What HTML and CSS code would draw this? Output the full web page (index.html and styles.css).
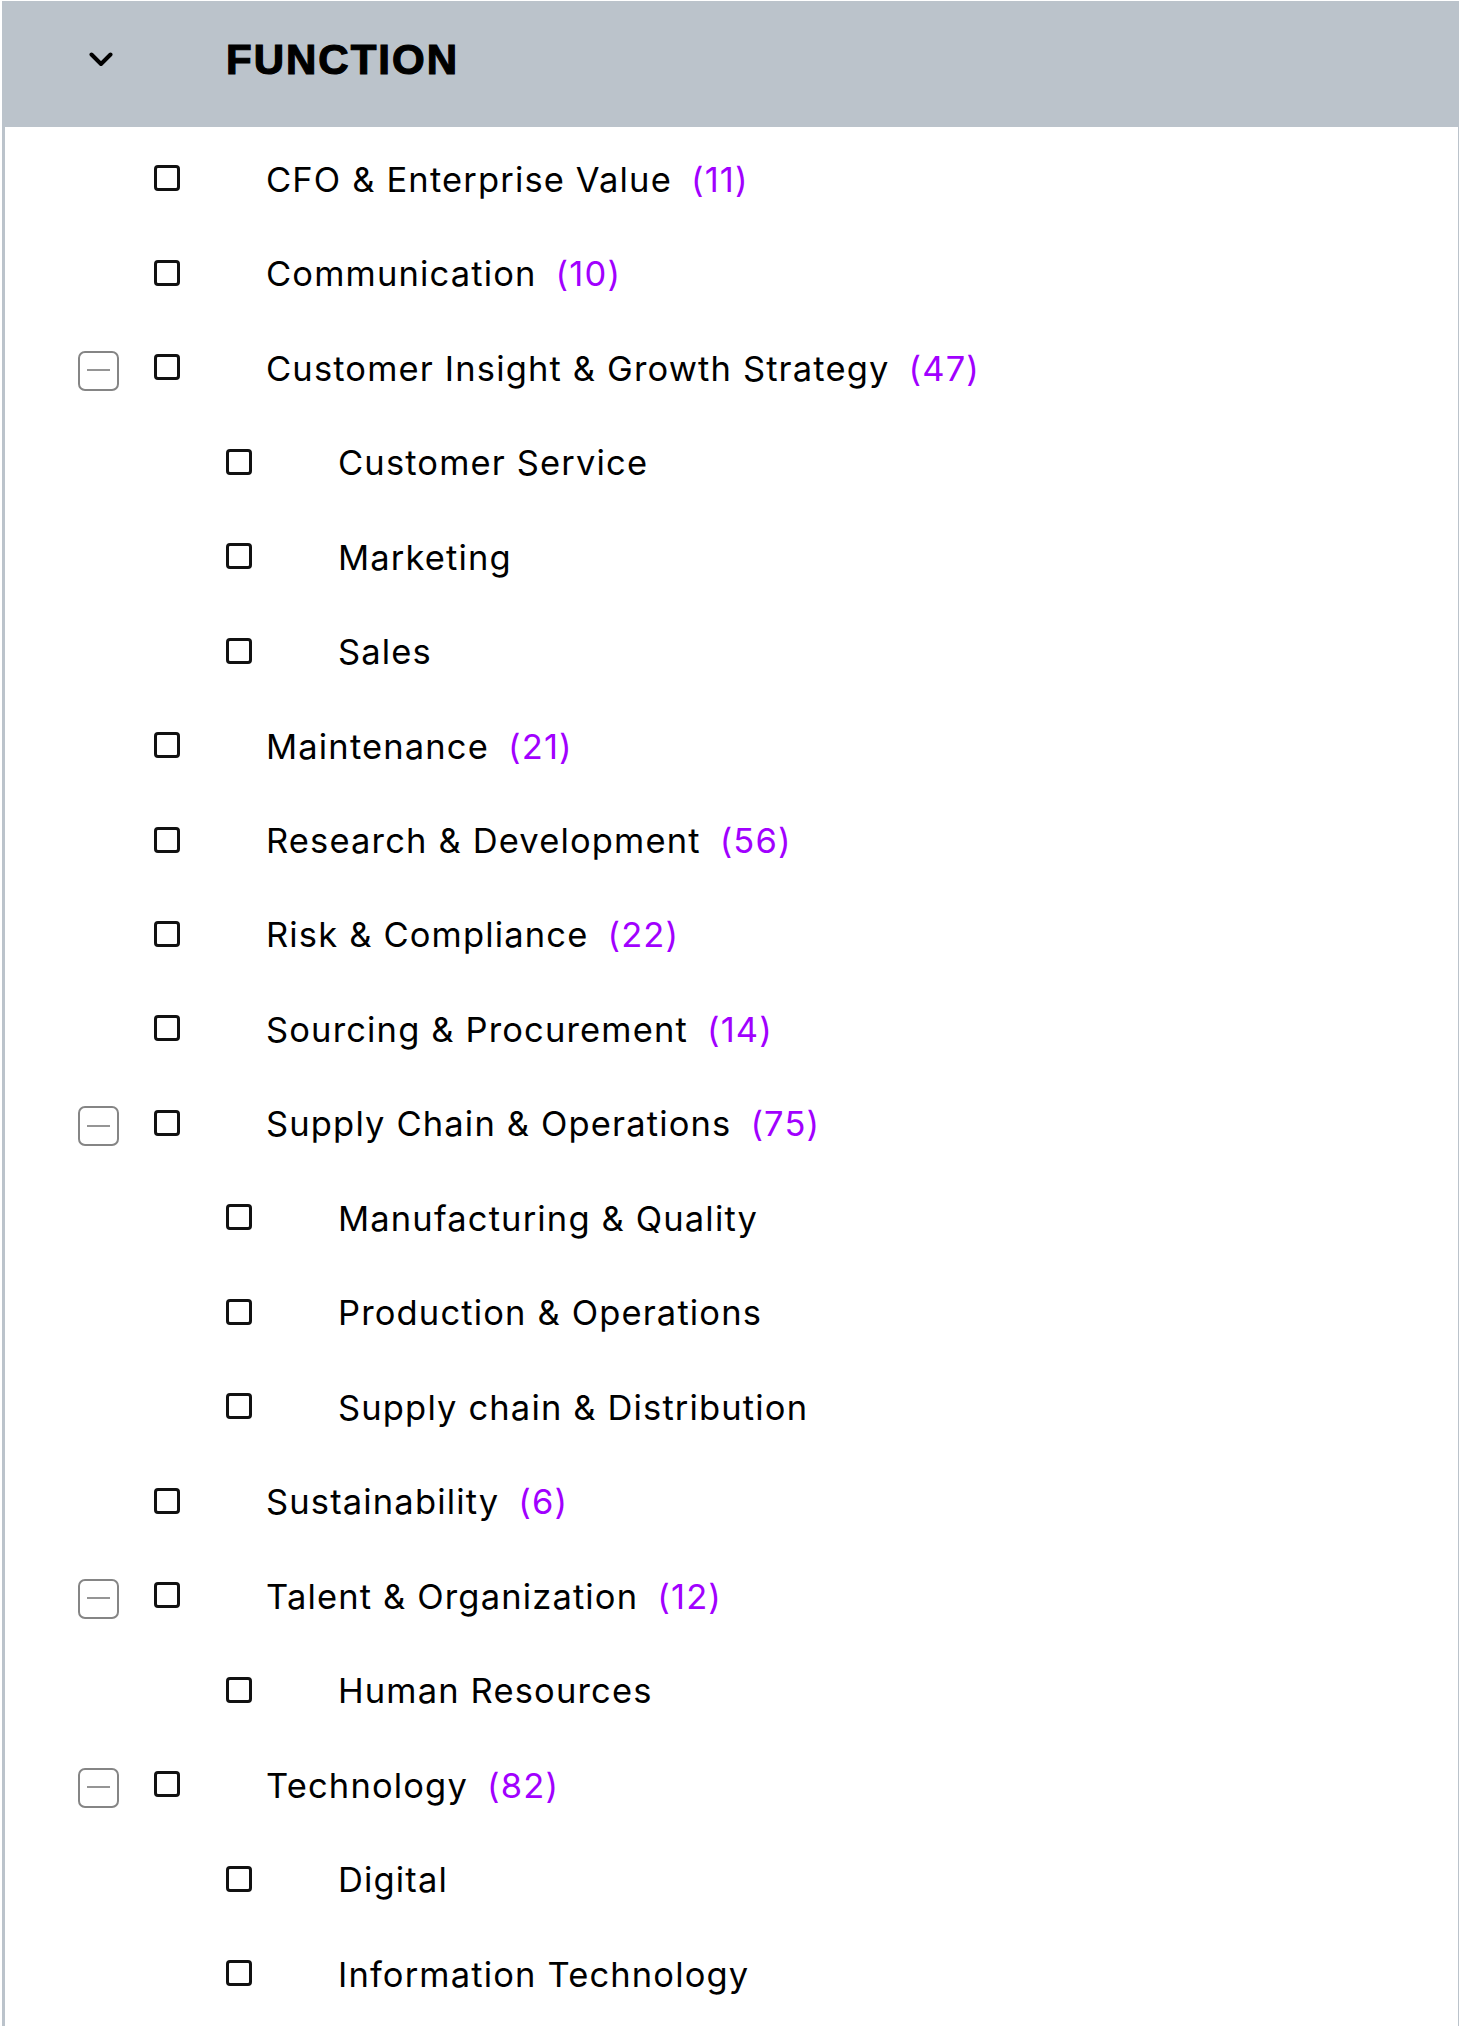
FILE: index.html
```html
<!DOCTYPE html>
<html>
<head>
<meta charset="utf-8">
<link rel="stylesheet" href="styles.css">
</head>
<body>
<div class="panel">
  <div class="panel-header">
    <svg class="chevron" width="24" height="15" viewBox="0 0 24 15"><polyline points="2.5,2.5 12,12 21.5,2.5" fill="none" stroke="#000" stroke-width="4" stroke-linecap="round" stroke-linejoin="round"/></svg>
    <span class="panel-title">FUNCTION</span>
  </div>
  <ul class="tree">
    <li class="row"><span class="toggle"></span><span class="checkbox"></span><span class="label">CFO &amp; Enterprise Value<span class="count">(11)</span></span></li>
    <li class="row"><span class="toggle"></span><span class="checkbox"></span><span class="label">Communication<span class="count">(10)</span></span></li>
    <li class="row"><span class="toggle minus"></span><span class="checkbox"></span><span class="label">Customer Insight &amp; Growth Strategy<span class="count">(47)</span></span></li>
    <li class="row child"><span class="toggle"></span><span class="checkbox"></span><span class="label">Customer Service</span></li>
    <li class="row child"><span class="toggle"></span><span class="checkbox"></span><span class="label">Marketing</span></li>
    <li class="row child"><span class="toggle"></span><span class="checkbox"></span><span class="label">Sales</span></li>
    <li class="row"><span class="toggle"></span><span class="checkbox"></span><span class="label">Maintenance<span class="count">(21)</span></span></li>
    <li class="row"><span class="toggle"></span><span class="checkbox"></span><span class="label">Research &amp; Development<span class="count">(56)</span></span></li>
    <li class="row"><span class="toggle"></span><span class="checkbox"></span><span class="label">Risk &amp; Compliance<span class="count">(22)</span></span></li>
    <li class="row"><span class="toggle"></span><span class="checkbox"></span><span class="label">Sourcing &amp; Procurement<span class="count">(14)</span></span></li>
    <li class="row"><span class="toggle minus"></span><span class="checkbox"></span><span class="label">Supply Chain &amp; Operations<span class="count">(75)</span></span></li>
    <li class="row child"><span class="toggle"></span><span class="checkbox"></span><span class="label">Manufacturing &amp; Quality</span></li>
    <li class="row child"><span class="toggle"></span><span class="checkbox"></span><span class="label">Production &amp; Operations</span></li>
    <li class="row child"><span class="toggle"></span><span class="checkbox"></span><span class="label">Supply chain &amp; Distribution</span></li>
    <li class="row"><span class="toggle"></span><span class="checkbox"></span><span class="label">Sustainability<span class="count">(6)</span></span></li>
    <li class="row"><span class="toggle minus"></span><span class="checkbox"></span><span class="label">Talent &amp; Organization<span class="count">(12)</span></span></li>
    <li class="row child"><span class="toggle"></span><span class="checkbox"></span><span class="label">Human Resources</span></li>
    <li class="row"><span class="toggle minus"></span><span class="checkbox"></span><span class="label">Technology<span class="count">(82)</span></span></li>
    <li class="row child"><span class="toggle"></span><span class="checkbox"></span><span class="label">Digital</span></li>
    <li class="row child"><span class="toggle"></span><span class="checkbox"></span><span class="label">Information Technology</span></li>
  </ul>
</div>
</body>
</html>
```
FILE: styles.css
```css
html, body {
  margin: 0;
  padding: 0;
  background: #ffffff;
}
body {
  padding: 1px 0 0 2px;
  font-family: "Inter", "Liberation Sans", sans-serif;
  color: #000;
}
.panel {
  border-left: 3px solid #bbc3cb;
  border-right: 1px solid #bbc3cb;
  min-height: 2025px;
  box-sizing: border-box;
}
.panel-header {
  height: 126px;
  background: #bbc3cb;
  display: flex;
  align-items: center;
  margin-left: -3px;
  margin-right: -1px;
  padding-left: 87px;
  box-sizing: border-box;
}
.chevron {
  display: block;
  margin-top: -9px;
}
.panel-title {
  margin-left: 113px;
  margin-top: -8px;
  font-family: "Liberation Sans", Arial, sans-serif;
  font-weight: 700;
  font-size: 42px;
  letter-spacing: 2px;
  -webkit-text-stroke: 1.2px #000;
}
.tree {
  list-style: none;
  margin: 0;
  padding: 4px 0 0 0;
}
.row {
  height: 94.47px;
  display: flex;
  align-items: center;
  padding-left: 73px;
}
.toggle {
  width: 41px;
  height: 40px;
  flex: none;
  box-sizing: border-box;
  margin-top: 7px;
}
.toggle.minus {
  border: 2.5px solid #858585;
  border-radius: 7px;
  position: relative;
}
.toggle.minus::after {
  content: "";
  position: absolute;
  left: 7px;
  right: 7px;
  top: 16.5px;
  height: 2px;
  background: #959595;
}
.checkbox {
  width: 26px;
  height: 26px;
  box-sizing: border-box;
  border: 3px solid #111;
  border-radius: 4px;
  flex: none;
  margin-left: 35px;
}
.child .checkbox {
  margin-left: 107px;
}
.label {
  margin-left: 86px;
  margin-top: 2px;
  font-size: 34.5px;
  font-weight: 370;
  letter-spacing: 1.15px;
  white-space: nowrap;
}
.child .label {
  margin-left: 86px;
}
.count {
  color: #a100ff;
  margin-left: 19px;
}
```
